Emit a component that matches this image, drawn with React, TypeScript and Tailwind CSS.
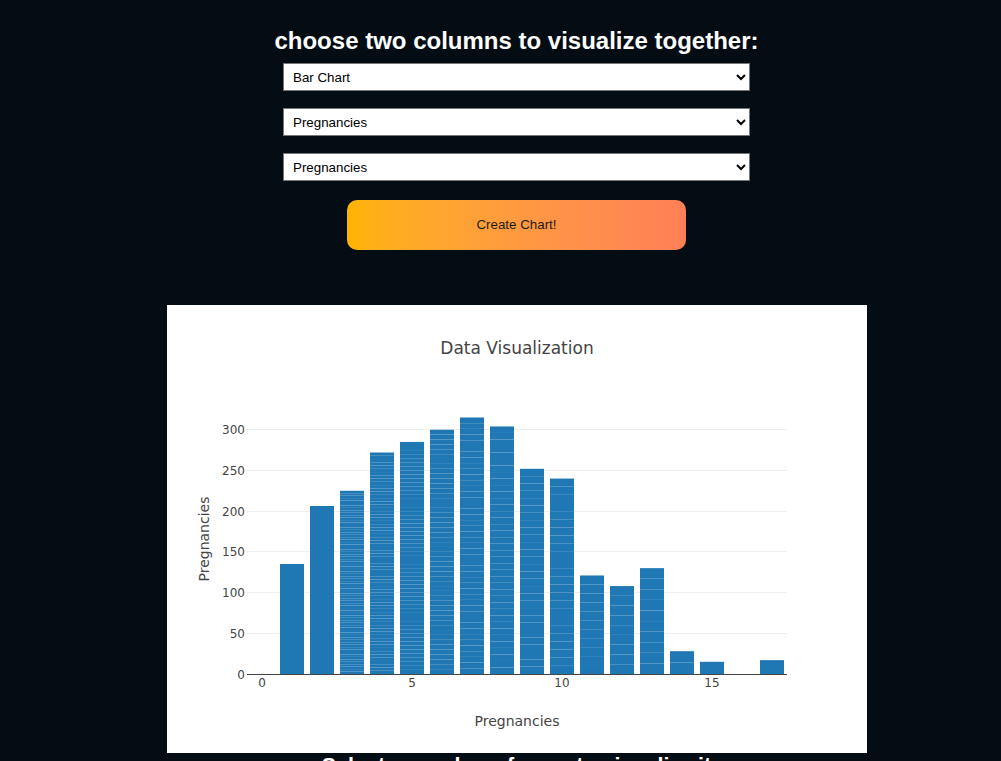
const counts: [number, number][] = [
  [1, 135], [2, 103], [3, 75], [4, 68], [5, 57], [6, 50], [7, 45], [8, 38],
  [9, 28], [10, 24], [11, 11], [12, 9], [13, 10], [14, 2], [15, 1], [17, 1],
]

const zero = 369
const perUnit = 270 / 331.58
const xAt = (v: number) => 95 + v * 30
const font = "'DejaVu Sans', Verdana, sans-serif"

function BarChart() {
  const bars: JSX.Element[] = []
  counts.forEach(([x, n]) => {
    for (let i = 0; i < n; i++) {
      let bottom = zero - i * x * perUnit
      let top = zero - (i + 1) * x * perUnit
      // very thin segments get expanded to whole pixels so they stay visible
      if (bottom - top < 2) {
        bottom = Math.ceil(bottom)
        top = Math.floor(top)
      }
      bars.push(
        <rect key={`${x}-${i}`} x={xAt(x) - 12} y={top} width={24} height={bottom - top} fill="#1f77b4" />
      )
    }
  })

  const ticks = [50, 100, 150, 200, 250, 300]

  return (
    <svg width={700} height={450} viewBox="0 0 700 450" style={{ fontFamily: font }}>
      <rect width={700} height={450} fill="#fff" />
      {ticks.map((t) => (
        <rect key={t} x={80} y={Math.floor(zero - t * perUnit)} width={540} height={1} fill="#eee" />
      ))}
      {bars}
      <rect x={80} y={zero} width={540} height={1} fill="#444" />
      {[0, ...ticks].map((t) => (
        <text key={t} x={78} y={Math.floor(zero - t * perUnit) + 4.7} textAnchor="end" fontSize={12} fill="#444">
          {t}
        </text>
      ))}
      {[0, 5, 10, 15].map((t) => (
        <text key={t} x={xAt(t)} y={382} textAnchor="middle" fontSize={12} fill="#444">
          {t}
        </text>
      ))}
      <text x={350} y={49} textAnchor="middle" fontSize={17} fill="#444">
        Data Visualization
      </text>
      <text x={350} y={421} textAnchor="middle" fontSize={14} fill="#444">
        Pregnancies
      </text>
      <text x={42} y={234} textAnchor="middle" fontSize={14} fill="#444" transform="rotate(-90 42 234)">
        Pregnancies
      </text>
    </svg>
  )
}

function Picker({ value, options }: { value: string; options: string[] }) {
  return (
    <select
      defaultValue={value}
      className="w-[467px] h-[28px] border border-[#767676] bg-white text-black text-[13.33px] pl-[5px] font-['Liberation_Sans',Arial,sans-serif]"
    >
      {options.map((o) => (
        <option key={o}>{o}</option>
      ))}
    </select>
  )
}

const columns = ['Pregnancies', 'Glucose', 'BloodPressure', 'SkinThickness', 'Insulin', 'BMI', 'Age', 'Outcome']

export default function App() {
  return (
    <div className="min-h-screen bg-[#050d14] pl-8 pt-[27px] flex flex-col items-center font-['Liberation_Sans',Arial,sans-serif]">
      <h2 className="text-[24px] leading-[28px] font-bold text-white">choose two columns to visualize together:</h2>

      <div className="mt-[8px] flex flex-col gap-[17px]">
        <Picker value="Bar Chart" options={['Bar Chart', 'Line Chart', 'Scatter Plot', 'Histogram']} />
        <Picker value="Pregnancies" options={columns} />
        <Picker value="Pregnancies" options={columns} />
      </div>

      <button className="mt-[19px] w-[339px] h-[50px] rounded-[10px] bg-linear-to-r from-[#ffb300] to-[#ff7f57] text-[13.33px] text-[#1c1c1c]">
        Create Chart!
      </button>

      <div className="mt-[55px] w-[700px] h-[448px] overflow-hidden bg-white">
        <BarChart />
      </div>

      <h2 className="text-[21.5px] leading-[26px] font-bold text-white">Select a number of rows to visualize it</h2>
      <div className="h-[200px]" />
    </div>
  )
}
